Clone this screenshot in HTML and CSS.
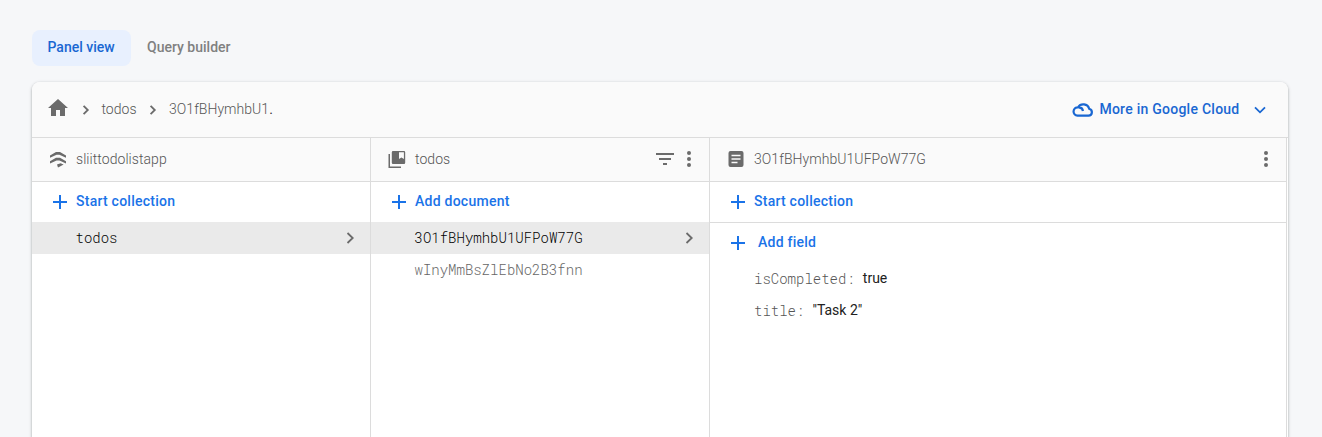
FILE: index.html
```html
<!DOCTYPE html>
<html lang="en">
<head>
<meta charset="utf-8">
<title>Firestore data</title>
<link rel="stylesheet" href="styles.css">
</head>
<body>
<nav class="tabs">
  <a class="tab active">Panel view</a>
  <a class="tab">Query builder</a>
</nav>
<main class="card">
  <header class="topbar">
    <svg class="home" width="24" height="24" viewBox="0 0 24 24"><path d="M10 20v-6h4v6h5v-8h3L12 3 2 12h3v8z"/></svg>
    <svg class="sep" width="8" height="12" viewBox="0 0 8 12"><path d="M1.600 1.800 5.800 6 1.600 10.200"/></svg>
    <span class="crumb">todos</span>
    <svg class="sep second" width="8" height="12" viewBox="0 0 8 12"><path d="M1.600 1.800 5.800 6 1.600 10.200"/></svg>
    <span class="crumb">3O1fBHymhbU1<b class="dot">.</b></span>
    <a class="cloud">
      <svg width="22" height="16" viewBox="0 0 22 16"><path d="M5.500 13.700h11a3.500 3.500 0 0 0 .7-6.900A6.200 6.200 0 0 0 6 5.300a4.200 4.200 0 0 0-.5 8.400zM6.800 5.600c2.600-.4 3.800.9 4.200 3.400"/></svg>
      <span>More in Google Cloud</span>
      <svg class="down" width="12" height="8" viewBox="0 0 12 8"><path d="M1 1.300 6 6.300 11 1.300"/></svg>
    </a>
  </header>
  <div class="columns">
    <section class="col">
      <div class="head">
        <svg class="head-icon" width="20" height="20" viewBox="0 0 20 20"><path d="M2 6.400 8 3h4l6 3.400v2.400l-6.600-3H8.600L2 8.800zM2 12.200 8 8.800h4l6 3.400v2.400l-6.600-3H8.600L2 14.600zM9 15.600l3.600-1.300 3 1.200-3.600 1.900-2 1.200z"/></svg>
        <span class="name">sliittodolistapp</span>
      </div>
      <a class="add"><svg width="14" height="14" viewBox="0 0 14 14"><path d="M7 0v14M0 7h14"/></svg><span>Start collection</span></a>
      <div class="row selected"><span>todos</span><svg width="9" height="12" viewBox="0 0 9 12"><path d="M1.500 1 6.700 6 1.500 11"/></svg></div>
    </section>
    <section class="col">
      <div class="head">
        <svg class="head-icon" width="20" height="20" viewBox="0 0 20 20"><path fill-rule="evenodd" d="M1.500 5H3v12.500h11V19H1.500zM6 2h11q1.200 0 1.200 1.200v10.600q0 1.200-1.200 1.200H6q-1.200 0-1.200-1.200V3.200Q4.800 2 6 2zM12 3.200v6.700l2.400-1.500 2.500 1.500V3.200z"/></svg>
        <span class="name">todos</span>
        <svg class="filter" width="18" height="12" viewBox="0 0 18 12"><path d="M0 0h18v2H0zM3 5h12v2H3zM7 10h4v2H7z"/></svg>
        <svg class="more" width="4" height="16" viewBox="0 0 4 16"><circle cx="2" cy="2" r="2"/><circle cx="2" cy="8" r="2"/><circle cx="2" cy="14" r="2"/></svg>
      </div>
      <a class="add"><svg width="14" height="14" viewBox="0 0 14 14"><path d="M7 0v14M0 7h14"/></svg><span>Add document</span></a>
      <div class="row selected"><span>3O1fBHymhbU1UFPoW77G</span><svg width="9" height="12" viewBox="0 0 9 12"><path d="M1.500 1 6.700 6 1.500 11"/></svg></div>
      <div class="row"><span>wInyMmBsZlEbNo2B3fnn</span></div>
    </section>
    <section class="col doc">
      <div class="head">
        <svg class="head-icon" width="20" height="20" viewBox="0 0 20 20"><path fill-rule="evenodd" d="M4.500 2h11q2 0 2 2v12q0 2-2 2h-11q-2 0-2-2V4q0-2 2-2zM5.500 5.800v1.500h9V5.800zM5.500 9.200v1.500h9V9.200zM5.500 12.700v1.500h6v-1.500z"/></svg>
        <span class="name">3O1fBHymhbU1UFPoW77G</span>
        <svg class="more" width="4" height="16" viewBox="0 0 4 16"><circle cx="2" cy="2" r="2"/><circle cx="2" cy="8" r="2"/><circle cx="2" cy="14" r="2"/></svg>
      </div>
      <a class="add lined"><svg width="14" height="14" viewBox="0 0 14 14"><path d="M7 0v14M0 7h14"/></svg><span>Start collection</span></a>
      <a class="add field-add"><svg width="14" height="14" viewBox="0 0 14 14"><path d="M7 0v14M0 7h14"/></svg><span>Add field</span></a>
      <div class="field"><span class="key">isCompleted:</span><span class="value">true</span></div>
      <div class="field"><span class="key">title:</span><span class="value">"Task 2"</span></div>
    </section>
  </div>
</main>
</body>
</html>
```
FILE: styles.css
```css
* { box-sizing: border-box; }
body {
  margin: 0;
  height: 437px;
  overflow: hidden;
  padding: 30px 34px 0 32px;
  background: #f6f7f9;
  font: 14px/20px Roboto, sans-serif;
  color: #808080;
}
svg { display: block; flex: none; fill: #6b6b6b; }
.tabs { display: flex; height: 36px; }
.tab {
  display: flex;
  align-items: center;
  padding: 0 16px 2px;
  font-weight: 500;
  border-radius: 8px;
}
.active { width: 99px; padding: 0 0 2px 15.500px; background: #e8f0fe; color: #1967d2; white-space: nowrap; }
.card {
  display: flex;
  flex-direction: column;
  height: 355px;
  margin-top: 16px;
  border-radius: 8px 8px 0 0;
  background: #fff;
  overflow: hidden;
  box-shadow: 0 1px 2px rgba(60,64,67,.3), 0 1px 3px 1px rgba(60,64,67,.15);
}
.topbar {
  display: flex;
  align-items: center;
  flex: none;
  height: 56px;
  padding: 0 22.500px 2px 14px;
  background: #fafafa;
  border-bottom: 1px solid #dcdcdc;
}
.home { margin-top: -1px; }
.sep { margin: 3px 11.700px 0; fill: none; stroke: #6b6b6b; stroke-width: 1.8; }
.second { margin-left: 12.500px; margin-right: 12px; }
.crumb { font-weight: 300; letter-spacing: .04px; color: #555; }
.dot { font-weight: 400; color: #333; }
.cloud {
  display: flex;
  align-items: center;
  margin-left: auto;
  color: #1967d2;
  font-weight: 500;
  letter-spacing: .25px;
}
.cloud svg { margin: 2px 5px 0 0; fill: none; stroke: #1967d2; stroke-width: 2.200; }
.cloud .down { margin: 3px 0 0 14px; stroke-width: 1.800; }
.columns { display: grid; grid-template-columns: 339px 339px 577px 1px; flex: 1; }
.col { border-right: 1px solid #dcdcdc; }
.head {
  display: flex;
  align-items: center;
  height: 44px;
  padding: 0 18px 2px 16px;
  background: #fafafa;
  border-bottom: 1px solid #dcdcdc;
}
.head-icon { margin: 1px 8px 0 0; }
.name { margin-right: auto; font-weight: 300; letter-spacing: .06px; color: #555; }
.filter { margin-right: 13px; }
.add {
  display: flex;
  align-items: center;
  height: 40px;
  padding: 0 0 2px 20px;
  color: #1a73e8;
  font-weight: 500;
  letter-spacing: .25px;
}
.add svg { margin: 1px 9.500px 0 .5px; stroke: #1a73e8; stroke-width: 2; }
.col:not(:first-child) .add svg { margin: 1px 9px 0 1px; }
.lined { height: 41px; border-bottom: 1px solid #dcdcdc; }
.field-add span { margin-left: 4px; }
.row {
  display: flex;
  align-items: center;
  justify-content: space-between;
  height: 32px;
  padding: 0 15.500px 0 43.500px;
  font-family: "Roboto Mono", monospace;
  font-weight: 300;
  color: #666;
}
.row svg { fill: none; stroke: #6b6b6b; stroke-width: 1.8; }
.selected { background: #eaeaea; color: #000; }
.field { display: flex; align-items: center; height: 32px; padding-left: 44px; }
.key { margin-right: 8px; font-family: "Roboto Mono", monospace; font-weight: 300; color: #555; }
.value { margin-top: -2px; color: #212121; }
```
